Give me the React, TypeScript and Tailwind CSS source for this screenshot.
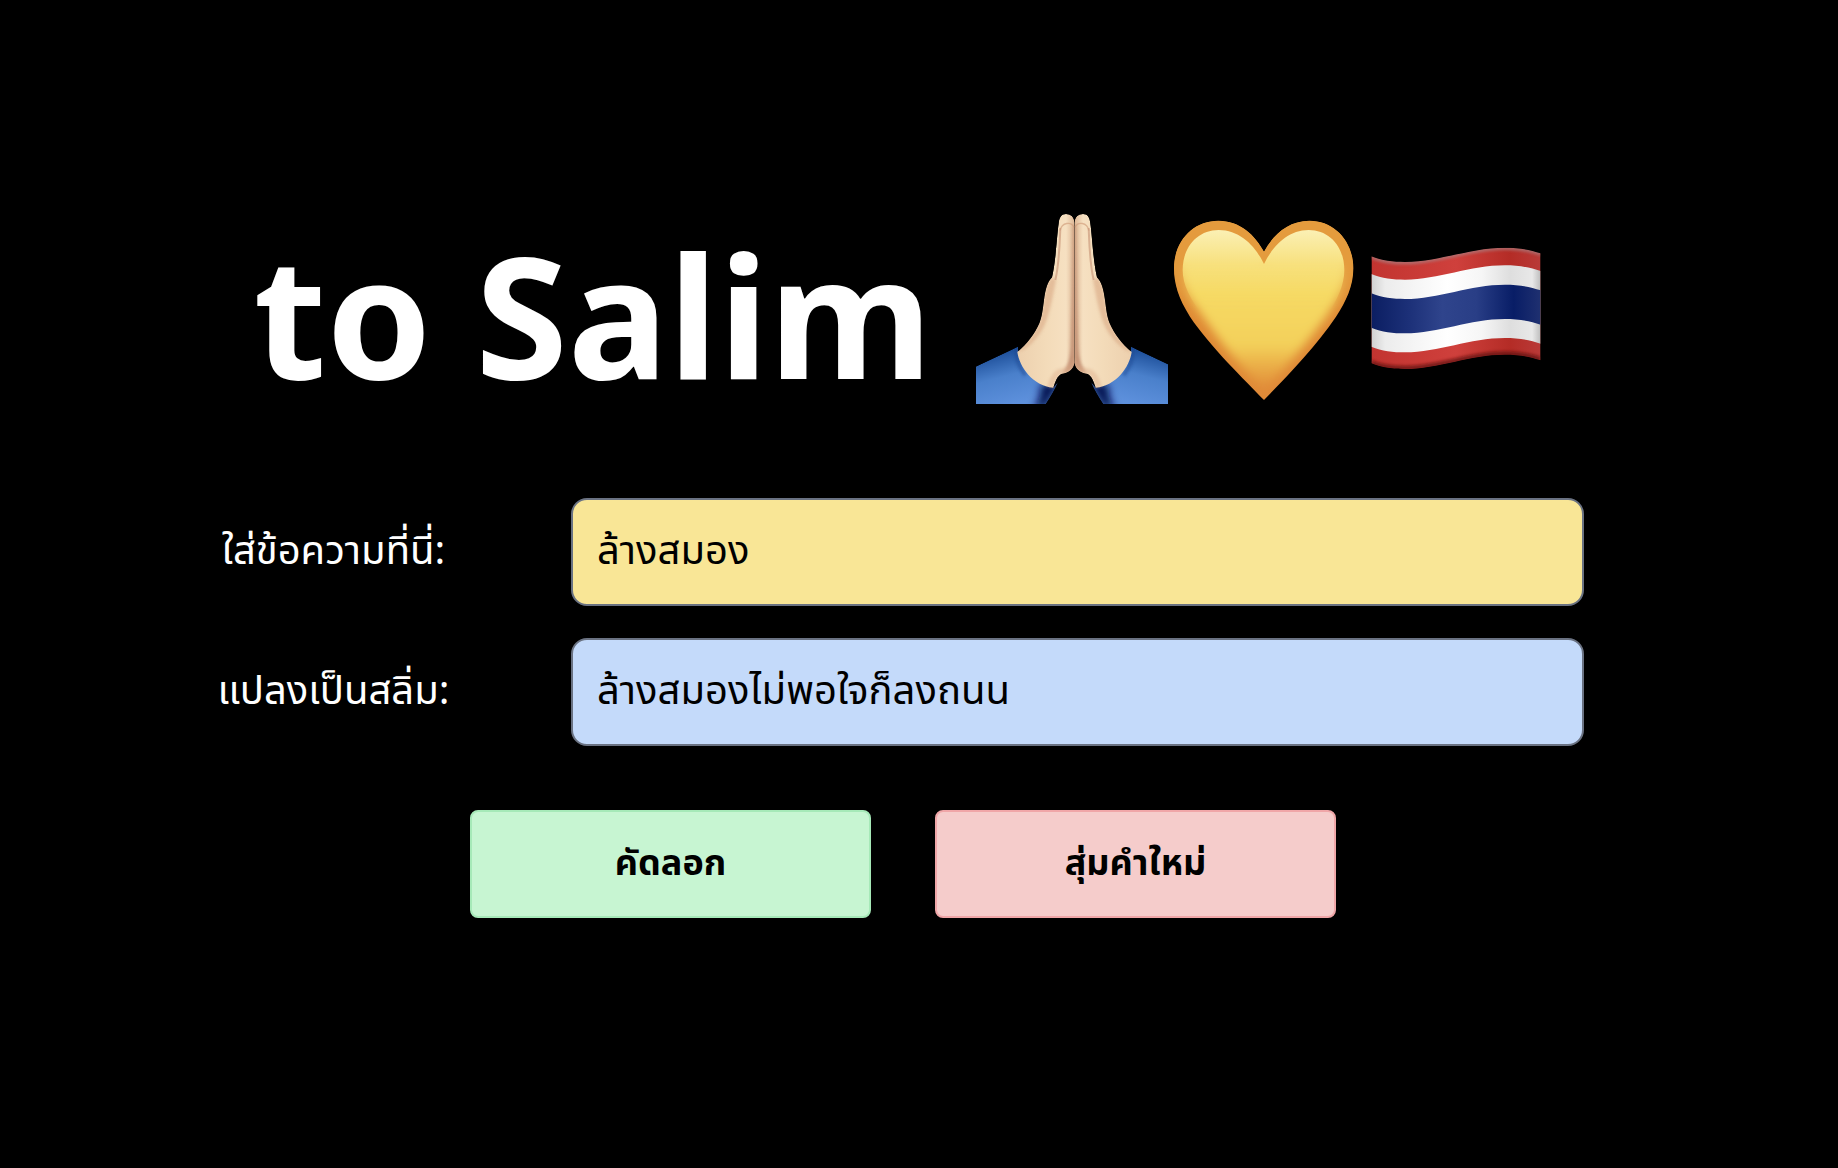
import { useState } from 'react';

const HAND =
  'M344 68 C342 50 332 42 318 42 C304 42 298 52 296 70 C290 110 288 180 276 232 C262 246 256 270 252 300 C248 330 246 350 238 370 C224 402 200 434 172 456 C178 500 218 558 280 563 C286 545 292 528 304 522 C326 518 340 508 344 488 Z';
const SLEEVE = 'M30 508 L174 440 C172 480 214 556 280 563 L294 546 C284 570 270 592 256 614 L30 614 Z';

function Hand() {
  return (
    <>
      <path d={SLEEVE} fill="url(#sleeve)" />
      <path
        d="M304 540 L256 624 L222 624 C240 600 244 580 240 562 L256 550 Z"
        fill="#03104c"
        filter="url(#soft12)"
      />
      <path
        d="M180 436 L170 444 C166 470 176 500 196 526"
        fill="none"
        stroke="#1a4590"
        strokeWidth="12"
        opacity="0.5"
        filter="url(#soft4)"
      />
      <path d={HAND} fill="url(#skin)" />
      <path
        d="M276 232 C262 246 256 270 252 300 C248 330 246 350 238 370 C224 402 200 434 172 456 C200 452 240 410 256 370 C272 330 280 280 288 240 Z"
        fill="#d9a884"
        opacity="0.6"
        filter="url(#soft4)"
      />
      <path
        d="M300 92 C306 66 334 64 342 82"
        fill="none"
        stroke="#d3a27f"
        strokeWidth="4"
        opacity="0.7"
        filter="url(#soft2)"
      />
      <path
        d="M301 84 C299 130 298 190 286 240"
        fill="none"
        stroke="#c9977a"
        strokeWidth="6"
        opacity="0.65"
        filter="url(#soft2)"
      />
      <path
        d="M344 74 L344 490 C340 508 326 518 306 522 C322 500 330 480 332 440 C336 320 338 180 339 80 Z"
        fill="#b57c60"
        opacity="0.65"
        filter="url(#soft4)"
      />
      <path
        d="M344 488 C340 508 326 518 304 522 C292 528 286 545 280 563 L262 560 C270 530 282 510 300 506 C320 502 334 494 344 470 Z"
        fill="#d9a682"
        opacity="0.4"
        filter="url(#soft4)"
      />
    </>
  );
}

function FoldedHands() {
  return (
    <svg viewBox="48 36 576 576" className="size-48 shrink-0" role="img" aria-label="Folded hands">
      <defs>
        <linearGradient id="skin" x1="0" y1="0" x2="1" y2="0">
          <stop offset="0" stopColor="#edd0ae" />
          <stop offset="0.5" stopColor="#f3dbb9" />
          <stop offset="0.85" stopColor="#f6e0c1" />
          <stop offset="1" stopColor="#dcb594" />
        </linearGradient>
        <linearGradient id="sleeve" x1="110" y1="462" x2="150" y2="614" gradientUnits="userSpaceOnUse">
          <stop offset="0" stopColor="#1f519c" />
          <stop offset="0.45" stopColor="#4a80cb" />
          <stop offset="1" stopColor="#5d90dc" />
        </linearGradient>
        <filter id="soft2" x="-100%" y="-50%" width="300%" height="200%">
          <feGaussianBlur stdDeviation="2" />
        </filter>
        <filter id="soft4" x="-100%" y="-50%" width="300%" height="200%">
          <feGaussianBlur stdDeviation="4" />
        </filter>
        <filter id="soft12" x="-100%" y="-50%" width="300%" height="200%">
          <feGaussianBlur stdDeviation="12" />
        </filter>
        <clipPath id="handArea">
          <path d={HAND} />
          <path d={SLEEVE} />
        </clipPath>
      </defs>
      <g clipPath="url(#handArea)">
        <Hand />
      </g>
      <g transform="translate(687 0) scale(-1 1)">
        <g clipPath="url(#handArea)">
          <Hand />
        </g>
      </g>
    </svg>
  );
}

const HEART =
  'M312 600 C255 540 150 440 90 350 C55 295 42 250 42 205 C42 122 100 62 175 62 C240 62 285 105 312 155 C339 105 384 62 448 62 C524 62 580 124 580 205 C580 258 558 305 528 350 C468 440 375 535 312 600 Z';
const HEART_INNER =
  'M312 570 C262 520 190 440 130 350 C90 295 68 255 68 210 C68 140 114 90 176 90 C240 90 286 138 312 192 C338 138 384 90 446 90 C508 90 553 140 553 210 C553 255 532 300 498 350 C440 430 366 516 312 570 Z';

function YellowHeart() {
  return (
    <svg viewBox="24 36 576 576" className="size-48 shrink-0" role="img" aria-label="Yellow heart">
      <defs>
        <linearGradient id="heartEdge" x1="0" y1="0" x2="0" y2="1">
          <stop offset="0" stopColor="#e39a3c" />
          <stop offset="0.6" stopColor="#df8a35" />
          <stop offset="1" stopColor="#e08a38" />
        </linearGradient>
        <linearGradient id="heartFill" x1="0" y1="90" x2="0" y2="570" gradientUnits="userSpaceOnUse">
          <stop offset="0" stopColor="#fbf0b4" />
          <stop offset="0.22" stopColor="#f7e07c" />
          <stop offset="0.4" stopColor="#f6da64" />
          <stop offset="0.72" stopColor="#f3d05a" />
          <stop offset="0.84" stopColor="#ebb048" />
          <stop offset="1" stopColor="#e08a38" />
        </linearGradient>
        <linearGradient id="fadeDown" x1="0" y1="180" x2="0" y2="330" gradientUnits="userSpaceOnUse">
          <stop offset="0" stopColor="#fff" />
          <stop offset="1" stopColor="#000" />
        </linearGradient>
        <mask id="upperPart" maskUnits="userSpaceOnUse" x="24" y="36" width="576" height="576">
          <rect x="24" y="36" width="576" height="576" fill="url(#fadeDown)" />
        </mask>
        <clipPath id="heartClip">
          <path d={HEART} />
        </clipPath>
        <filter id="blur14" x="-20%" y="-20%" width="140%" height="140%">
          <feGaussianBlur stdDeviation="14" />
        </filter>
        <filter id="blur2" x="-20%" y="-20%" width="140%" height="140%">
          <feGaussianBlur stdDeviation="2" />
        </filter>
      </defs>
      <path d={HEART} fill="url(#heartEdge)" />
      <g clipPath="url(#heartClip)">
        <path d={HEART_INNER} fill="url(#heartFill)" filter="url(#blur14)" />
        <g mask="url(#upperPart)">
          <path d={HEART} fill="#e49b3d" />
          <path d={HEART_INNER} fill="url(#heartFill)" filter="url(#blur2)" />
        </g>
      </g>
    </svg>
  );
}

function wave(top: number, bottom: number) {
  return `M64 ${top} C95 ${top + 13} 130 ${top + 17} 165 ${top + 17} C265 ${top + 17} 360 ${top - 26} 465 ${top - 26} C505 ${top - 26} 540 ${top - 20} 572 ${top - 9} L572 ${bottom - 9} C540 ${bottom - 20} 505 ${bottom - 26} 465 ${bottom - 26} C360 ${bottom - 26} 265 ${bottom + 17} 165 ${bottom + 17} C130 ${bottom + 17} 95 ${bottom + 13} 64 ${bottom} Z`;
}

function ThaiFlag() {
  return (
    <svg viewBox="30 -24 576 576" className="size-48 shrink-0" role="img" aria-label="Flag of Thailand">
      <defs>
        <linearGradient id="navy" x1="0" y1="0" x2="1" y2="0">
          <stop offset="0" stopColor="#0b1e62" />
          <stop offset="0.22" stopColor="#1c3078" />
          <stop offset="0.42" stopColor="#2f448c" />
          <stop offset="0.62" stopColor="#293e86" />
          <stop offset="0.84" stopColor="#081d66" />
          <stop offset="1" stopColor="#1f3070" />
        </linearGradient>
        <linearGradient id="flagRed" x1="0" y1="0" x2="1" y2="0">
          <stop offset="0" stopColor="#c23430" />
          <stop offset="0.5" stopColor="#cf403c" />
          <stop offset="0.82" stopColor="#b42c26" />
          <stop offset="1" stopColor="#b93a38" />
        </linearGradient>
        <linearGradient id="flagWhite" x1="0" y1="0" x2="1" y2="0">
          <stop offset="0" stopColor="#d0d0d0" />
          <stop offset="0.08" stopColor="#ececec" />
          <stop offset="0.45" stopColor="#ffffff" />
          <stop offset="0.65" stopColor="#f6f6f6" />
          <stop offset="0.82" stopColor="#dedede" />
          <stop offset="0.95" stopColor="#e8e8e8" />
          <stop offset="1" stopColor="#bdbdbd" />
        </linearGradient>
        <clipPath id="flagClip">
          <path d={wave(109, 430)} />
        </clipPath>
        <filter id="edgeBlur" x="-20%" y="-20%" width="140%" height="140%">
          <feGaussianBlur stdDeviation="5" />
        </filter>
      </defs>
      <g clipPath="url(#flagClip)">
        <path d={wave(109, 430)} fill="url(#flagRed)" />
        <path d={wave(162, 380)} fill="url(#flagWhite)" />
        <path d={wave(220, 323)} fill="url(#navy)" />
        <path d={wave(103, 116)} fill="#a98284" opacity="0.7" filter="url(#edgeBlur)" />
        <path d={wave(420, 436)} fill="#5a0f0d" opacity="0.7" filter="url(#edgeBlur)" />
      </g>
    </svg>
  );
}

export default function App() {
  const [text, setText] = useState('ล้างสมอง');
  const [result, setResult] = useState('ล้างสมองไม่พอใจก็ลงถนน');

  return (
    <main className="min-h-screen bg-black pt-[188px] pr-8 font-['Noto_Sans_Thai',sans-serif]">
      <h1 className="flex h-60 items-center justify-center text-[168px] leading-none font-bold text-white font-['Noto_Sans',sans-serif]">
        <span className="mr-11 pt-3">to Salim</span>
        <FoldedHands />
        <YellowHeart />
        <ThaiFlag />
      </h1>

      <form className="mt-[70px] flex flex-col gap-8 px-40" onSubmit={(e) => e.preventDefault()}>
        <div className="flex items-center">
          <label htmlFor="source" className="w-[347px] text-center text-[40px] leading-14 text-white">
            ใส่ข้อความที่นี่:
          </label>
          <input
            id="source"
            value={text}
            onChange={(e) => setText(e.target.value)}
            className="mr-[62px] ml-16 h-27 min-w-0 flex-1 rounded-2xl border-2 border-gray-500 bg-[#f9e696] px-6 text-[40px] text-black"
          />
        </div>
        <div className="flex items-center">
          <label htmlFor="result" className="w-[347px] text-center text-[40px] leading-14 text-white">
            แปลงเป็นสลิ่ม:
          </label>
          <input
            id="result"
            value={result}
            onChange={(e) => setResult(e.target.value)}
            className="mr-[62px] ml-16 h-27 min-w-0 flex-1 rounded-2xl border-2 border-gray-500 bg-[#c4dafa] px-6 text-[40px] text-black"
          />
        </div>
        <div className="mt-8 flex justify-center gap-16">
          <button
            type="button"
            className="h-27 w-[401px] rounded-lg border-2 border-[#a6e9b8] bg-[#c7f5d2] text-[36px] font-bold text-black"
          >
            คัดลอก
          </button>
          <button
            type="button"
            className="h-27 w-[401px] rounded-lg border-2 border-[#f0a6a8] bg-[#f5cccb] text-[36px] font-bold text-black"
          >
            สุ่มคำใหม่
          </button>
        </div>
      </form>
    </main>
  );
}
